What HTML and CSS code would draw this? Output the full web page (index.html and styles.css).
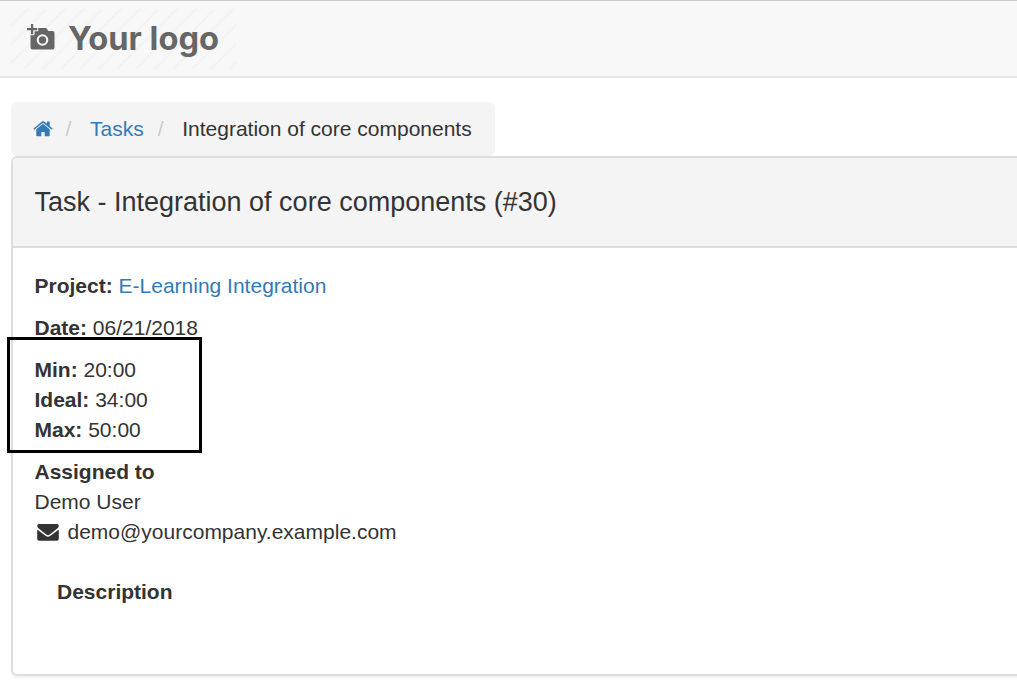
FILE: index.html
```html
<!DOCTYPE html>
<html lang="en">
<head>
<meta charset="utf-8">
<title>Task - Integration of core components (#30)</title>
<link rel="stylesheet" href="styles.css">
</head>
<body>
<header class="navbar">
  <svg class="logo" width="225" height="60" viewBox="0 0 225 60" role="img" aria-label="Your logo">
    <defs>
      <pattern id="stripes" width="18.700" height="18.700" patternUnits="userSpaceOnUse" patternTransform="translate(-2 0)">
        <path d="M-2 20.700L20.700 -2M-2 2L2-2M16.700 20.700L20.700 16.700" stroke="#f3f3f3" stroke-width="2.500"/>
      </pattern>
    </defs>
    <rect width="225" height="60" fill="url(#stripes)"/>
    <path class="logo-ink" fill-rule="evenodd" d="M26.500 19h8.500l2.500 3h4a2 2 0 0 1 2 2v14.500a2 2 0 0 1-2 2h-20a2 2 0 0 1-2-2V25.500h4v-4h3zM31.500 25.200a5.800 5.800 0 1 0 0 11.600a5.800 5.800 0 0 0 0-11.600z"/>
    <circle class="logo-ink" cx="31.500" cy="31" r="3.700"/>
    <path class="logo-ink logo-plus" d="M20 15h2.200v4h4v2.200h-4v4H20v-4h-4V19h4z"/>
    <text class="logo-text" x="57" y="40.500" textLength="151" lengthAdjust="spacingAndGlyphs">Your logo</text>
  </svg>
</header>
<main class="content">
  <nav class="breadcrumb">
    <a href="#" class="home" aria-label="Home">
      <svg width="20" height="18" viewBox="0 0 20 18"><path d="M10 3.800L16.700 9.300V15.600q0 .7-.7.700h-4.300v-4.300H8.300v4.300H4q-.7 0-.7-.7V9.300zM.3 8.700L9 1.400q1-.8 2 0L13.900 3.800V1.400h2.800v4.700l3 2.600-.9 1.100L10 2.700 1.200 9.800z"/></svg>
    </a>
    <span class="sep">/</span>
    <a href="#">Tasks</a>
    <span class="sep">/</span>
    <span>Integration of core components</span>
  </nav>
  <section class="panel">
    <div class="panel-heading"><h1>Task - Integration of core components (#30)</h1></div>
    <div class="panel-body">
      <p><b>Project:</b> <a href="#">E-Learning Integration</a></p>
      <p><b>Date:</b> 06/21/2018</p>
      <div class="hours">
        <div><b>Min:</b> 20:00</div>
        <div><b>Ideal:</b> 34:00</div>
        <div><b>Max:</b> 50:00</div>
      </div>
      <div class="assignee">
        <b>Assigned to</b>
        <div>Demo User</div>
        <div class="email">
          <svg width="22" height="17" viewBox="0 0 22 17"><path d="M2 0h18q1.800 0 1.800 1.700 0 1.600-1.500 2.700L12.800 10.500Q11 12 9.200 10.500L1.700 4.400Q.2 3.300.2 1.700.2 0 2 0zM.2 5.400L8.900 12.100q2.100 1.400 4.200 0L21.800 5.400V15q0 1.800-1.800 1.800H2Q.2 16.800.2 15z"/></svg>
          <span>demo@yourcompany.example.com</span>
        </div>
      </div>
      <div class="description"><b>Description</b></div>
    </div>
  </section>
</main>
</body>
</html>
```

FILE: styles.css
```css
* {
  box-sizing: border-box;
}

body {
  margin: 0;
  height: 688px;
  overflow: hidden;
  background: #fff;
  color: #333;
  font: 21px/30px "Liberation Sans", Arial, sans-serif;
}

a {
  color: #337ab7;
  text-decoration: none;
}

.navbar {
  height: 78px;
  padding: 8px 11px;
  background: #f8f8f8;
  border-top: 1px solid #ccc;
  border-bottom: 2px solid #e7e7e7;
}

.logo {
  display: block;
}

.logo-ink {
  fill: #666;
}

.logo-plus {
  stroke: #f8f8f8;
  stroke-width: 2px;
  paint-order: stroke;
}

.logo-text {
  fill: #666;
  font: 700 32px Inter, sans-serif;
}

.content {
  padding: 24px 0 0 11px;
}

.breadcrumb {
  display: flex;
  align-items: center;
  width: 484px;
  height: 54px;
  padding-left: 22px;
  background: #f4f4f4;
  border-radius: 6px;
}

.home {
  display: flex;
}

.home svg {
  fill: #337ab7;
}

.sep {
  width: 6px;
  margin: 0 18.500px 0 12.500px;
  color: #ccc;
}

a + .sep:not(.home + .sep) {
  margin-left: 14px;
}

.panel {
  width: 1040px;
  height: 520px;
  border: 2px solid #ddd;
  border-radius: 6px;
  box-shadow: 0 1.500px 1.500px rgba(0, 0, 0, .05);
}

.panel-heading {
  display: flex;
  align-items: center;
  height: 90px;
  padding-left: 21.500px;
  background: #f4f4f4;
  border-bottom: 2px solid #ddd;
  border-radius: 4px 4px 0 0;
}

h1 {
  margin: 0;
  font-size: 27px;
  font-weight: 400;
}

.panel-body {
  padding: 23px 21.500px;
}

p {
  margin: 0 0 12px;
}

.hours {
  width: 195px;
  margin: -18px 0 4px -27.500px;
  padding: 15px 25px 5px 24.500px;
  border: 3px solid #000;
  position: relative;
}

.email {
  display: flex;
  align-items: center;
  gap: 8.500px;
  padding-left: 2.500px;
}

.email svg {
  fill: #333;
}

.description {
  margin: 30px 0 0 22.500px;
}
```
